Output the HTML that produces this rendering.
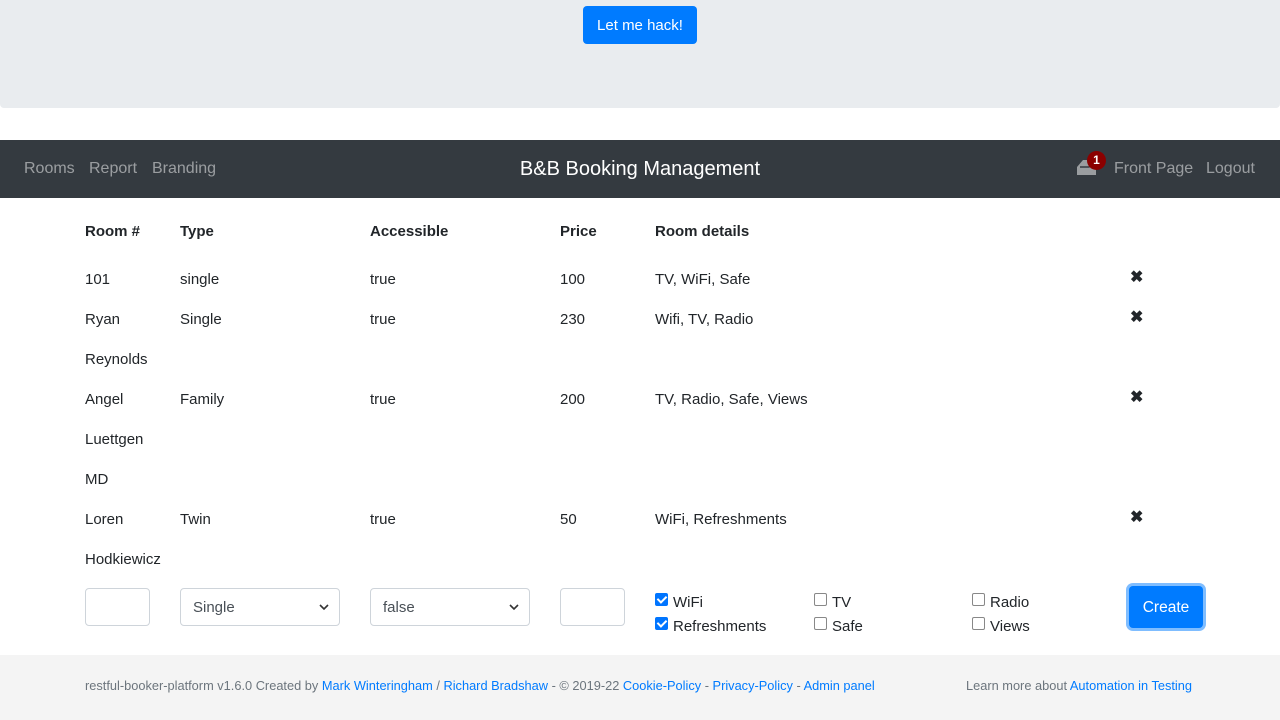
<!DOCTYPE html>
<html><head><style>
*{box-sizing:border-box}
body{margin:0;width:1280px;height:720px;font-family:"Liberation Sans",sans-serif;font-size:15px;color:#212529;background:#fff;position:relative;overflow:hidden}
.top{position:absolute;left:0;top:0;width:1280px;height:108px;background:#e9ecef;border-radius:0 0 4px 4px}
.hack{position:absolute;left:583px;top:6px;width:114px;height:38px;background:#007bff;color:#fff;border-radius:4px;text-align:center;line-height:40px;font-size:15px}
.nav{position:absolute;left:0;top:140px;width:1280px;height:58px;background:#343a40}
.nav a{position:absolute;color:rgba(255,255,255,.5);font-size:16px;top:20px}
.brand{position:absolute;left:0;width:1280px;text-align:center;top:18px;color:#fff;font-size:20px}
.t{position:absolute;font-size:15px;margin-top:2px}
.b{font-weight:bold}
.x{position:absolute;left:1130px;font-size:16px;font-weight:bold}
.inp{position:absolute;top:588px;height:38px;border:1px solid #ced4da;border-radius:4px;background:#fff;font-size:15px;padding:10px 12px;color:#495057}
.inp svg{position:absolute;right:10px;top:15px}
.cb{position:absolute;width:13px;height:13px;border:1.5px solid #888;border-radius:2px;background:#fff}
.cb.on{background:#0075ff;border-color:#0075ff}
.cb.on:after{content:"";position:absolute;left:3px;top:0px;width:4px;height:7px;border:solid #fff;border-width:0 2px 2px 0;transform:rotate(45deg)}
.create{position:absolute;left:1129px;top:586px;width:74px;height:42px;background:#007bff;color:#fff;border-radius:4px;box-shadow:0 0 0 3px rgba(0,123,255,.5);text-align:center;line-height:44px;font-size:15.5px}
.foot{position:absolute;left:0;top:655px;width:1280px;height:65px;background:#f4f4f4;font-size:12.8px;color:#6c757d}
.foot span{position:absolute;top:23px}
.foot i{font-style:normal;color:#007bff}
</style></head><body>
<div class="top"><div class="hack">Let me hack!</div></div>
<div class="nav">
<a style="left:24px">Rooms</a><a style="left:89px">Report</a><a style="left:152px">Branding</a>
<div class="brand">B&amp;B Booking Management</div>
<svg style="position:absolute;left:1076px;top:17px" width="24" height="20" viewBox="0 0 24 20"><path d="M1 10 L7 3 H20 V18 H1 Z" fill="#9a9da0"/><path d="M4 10 H13 L17 6" stroke="#343a40" stroke-width="1.5" fill="none"/></svg>
<div style="position:absolute;left:1087px;top:11px;width:19px;height:19px;border-radius:50%;background:#8b0000;color:#fff;font-size:12px;font-weight:bold;text-align:center;line-height:19px">1</div>
<a style="left:1114px">Front Page</a><a style="left:1206px">Logout</a>
</div>
<div class="t b" style="left:85px;top:221px">Room #</div>
<div class="t b" style="left:180px;top:221px">Type</div>
<div class="t b" style="left:370px;top:221px">Accessible</div>
<div class="t b" style="left:560px;top:221px">Price</div>
<div class="t b" style="left:655px;top:221px">Room details</div>

<div class="t" style="left:85px;top:269px">101</div><div class="t" style="left:180px;top:269px">single</div><div class="t" style="left:370px;top:269px">true</div><div class="t" style="left:560px;top:269px">100</div><div class="t" style="left:655px;top:269px">TV, WiFi, Safe</div><div class="x" style="top:267px">✖</div>
<div class="t" style="left:85px;top:309px">Ryan</div><div class="t" style="left:85px;top:349px">Reynolds</div><div class="t" style="left:180px;top:309px">Single</div><div class="t" style="left:370px;top:309px">true</div><div class="t" style="left:560px;top:309px">230</div><div class="t" style="left:655px;top:309px">Wifi, TV, Radio</div><div class="x" style="top:307px">✖</div>
<div class="t" style="left:85px;top:389px">Angel</div><div class="t" style="left:85px;top:429px">Luettgen</div><div class="t" style="left:85px;top:469px">MD</div><div class="t" style="left:180px;top:389px">Family</div><div class="t" style="left:370px;top:389px">true</div><div class="t" style="left:560px;top:389px">200</div><div class="t" style="left:655px;top:389px">TV, Radio, Safe, Views</div><div class="x" style="top:387px">✖</div>
<div class="t" style="left:85px;top:509px">Loren</div><div class="t" style="left:85px;top:549px">Hodkiewicz</div><div class="t" style="left:180px;top:509px">Twin</div><div class="t" style="left:370px;top:509px">true</div><div class="t" style="left:560px;top:509px">50</div><div class="t" style="left:655px;top:509px">WiFi, Refreshments</div><div class="x" style="top:507px">✖</div>

<div class="inp" style="left:85px;width:65px"></div>
<div class="inp" style="left:180px;width:160px">Single<svg width="10" height="7" viewBox="0 0 10 7"><path d="M1 1 L5 5 L9 1" stroke="#333" stroke-width="1.6" fill="none"/></svg></div>
<div class="inp" style="left:370px;width:160px">false<svg width="10" height="7" viewBox="0 0 10 7"><path d="M1 1 L5 5 L9 1" stroke="#333" stroke-width="1.6" fill="none"/></svg></div>
<div class="inp" style="left:560px;width:65px"></div>

<div class="cb on" style="left:655px;top:593px"></div><div class="t" style="left:673px;top:592px">WiFi</div>
<div class="cb on" style="left:655px;top:617px"></div><div class="t" style="left:673px;top:616px">Refreshments</div>
<div class="cb" style="left:814px;top:593px"></div><div class="t" style="left:832px;top:592px">TV</div>
<div class="cb" style="left:814px;top:617px"></div><div class="t" style="left:832px;top:616px">Safe</div>
<div class="cb" style="left:972px;top:593px"></div><div class="t" style="left:990px;top:592px">Radio</div>
<div class="cb" style="left:972px;top:617px"></div><div class="t" style="left:990px;top:616px">Views</div>
<div class="create">Create</div>

<div class="foot">
<span style="left:85px">restful-booker-platform v1.6.0 Created by <i>Mark Winteringham</i> / <i>Richard Bradshaw</i> - © 2019-22 <i>Cookie-Policy</i> - <i>Privacy-Policy</i> - <i>Admin panel</i></span>
<span style="left:966px">Learn more about <i>Automation in Testing</i></span>
</div>
</body></html>
